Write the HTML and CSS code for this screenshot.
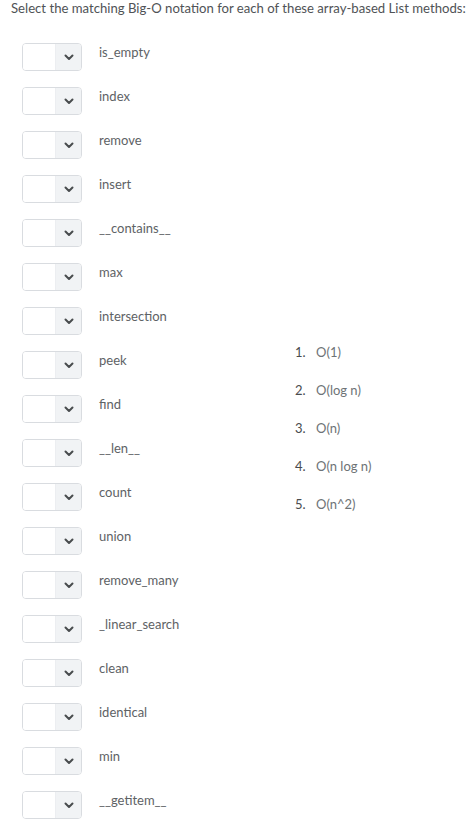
FILE: index.html
```html
<!DOCTYPE html>
<html>
<head>
<meta charset="utf-8">
<link rel="stylesheet" href="styles.css">
</head>
<body>
<p class="title">Select the matching Big-O notation for each of these array-based List methods:</p>
<div class="quiz">
  <div class="rows">
    <div class="row"><div class="sel"><span class="val"></span><span class="btn"><svg width="10" height="7" viewBox="0 0 10 7"><path d="M1.5 1.5 L5 5 L8.5 1.5" fill="none" stroke="#494c4e" stroke-width="2" stroke-linecap="round" stroke-linejoin="round"/></svg></span></div><span class="label">is_empty</span></div>
    <div class="row"><div class="sel"><span class="val"></span><span class="btn"><svg width="10" height="7" viewBox="0 0 10 7"><path d="M1.5 1.5 L5 5 L8.5 1.5" fill="none" stroke="#494c4e" stroke-width="2" stroke-linecap="round" stroke-linejoin="round"/></svg></span></div><span class="label">index</span></div>
    <div class="row"><div class="sel"><span class="val"></span><span class="btn"><svg width="10" height="7" viewBox="0 0 10 7"><path d="M1.5 1.5 L5 5 L8.5 1.5" fill="none" stroke="#494c4e" stroke-width="2" stroke-linecap="round" stroke-linejoin="round"/></svg></span></div><span class="label">remove</span></div>
    <div class="row"><div class="sel"><span class="val"></span><span class="btn"><svg width="10" height="7" viewBox="0 0 10 7"><path d="M1.5 1.5 L5 5 L8.5 1.5" fill="none" stroke="#494c4e" stroke-width="2" stroke-linecap="round" stroke-linejoin="round"/></svg></span></div><span class="label">insert</span></div>
    <div class="row"><div class="sel"><span class="val"></span><span class="btn"><svg width="10" height="7" viewBox="0 0 10 7"><path d="M1.5 1.5 L5 5 L8.5 1.5" fill="none" stroke="#494c4e" stroke-width="2" stroke-linecap="round" stroke-linejoin="round"/></svg></span></div><span class="label">__contains__</span></div>
    <div class="row"><div class="sel"><span class="val"></span><span class="btn"><svg width="10" height="7" viewBox="0 0 10 7"><path d="M1.5 1.5 L5 5 L8.5 1.5" fill="none" stroke="#494c4e" stroke-width="2" stroke-linecap="round" stroke-linejoin="round"/></svg></span></div><span class="label">max</span></div>
    <div class="row"><div class="sel"><span class="val"></span><span class="btn"><svg width="10" height="7" viewBox="0 0 10 7"><path d="M1.5 1.5 L5 5 L8.5 1.5" fill="none" stroke="#494c4e" stroke-width="2" stroke-linecap="round" stroke-linejoin="round"/></svg></span></div><span class="label">intersection</span></div>
    <div class="row"><div class="sel"><span class="val"></span><span class="btn"><svg width="10" height="7" viewBox="0 0 10 7"><path d="M1.5 1.5 L5 5 L8.5 1.5" fill="none" stroke="#494c4e" stroke-width="2" stroke-linecap="round" stroke-linejoin="round"/></svg></span></div><span class="label">peek</span></div>
    <div class="row"><div class="sel"><span class="val"></span><span class="btn"><svg width="10" height="7" viewBox="0 0 10 7"><path d="M1.5 1.5 L5 5 L8.5 1.5" fill="none" stroke="#494c4e" stroke-width="2" stroke-linecap="round" stroke-linejoin="round"/></svg></span></div><span class="label">find</span></div>
    <div class="row"><div class="sel"><span class="val"></span><span class="btn"><svg width="10" height="7" viewBox="0 0 10 7"><path d="M1.5 1.5 L5 5 L8.5 1.5" fill="none" stroke="#494c4e" stroke-width="2" stroke-linecap="round" stroke-linejoin="round"/></svg></span></div><span class="label">__len__</span></div>
    <div class="row"><div class="sel"><span class="val"></span><span class="btn"><svg width="10" height="7" viewBox="0 0 10 7"><path d="M1.5 1.5 L5 5 L8.5 1.5" fill="none" stroke="#494c4e" stroke-width="2" stroke-linecap="round" stroke-linejoin="round"/></svg></span></div><span class="label">count</span></div>
    <div class="row"><div class="sel"><span class="val"></span><span class="btn"><svg width="10" height="7" viewBox="0 0 10 7"><path d="M1.5 1.5 L5 5 L8.5 1.5" fill="none" stroke="#494c4e" stroke-width="2" stroke-linecap="round" stroke-linejoin="round"/></svg></span></div><span class="label">union</span></div>
    <div class="row"><div class="sel"><span class="val"></span><span class="btn"><svg width="10" height="7" viewBox="0 0 10 7"><path d="M1.5 1.5 L5 5 L8.5 1.5" fill="none" stroke="#494c4e" stroke-width="2" stroke-linecap="round" stroke-linejoin="round"/></svg></span></div><span class="label">remove_many</span></div>
    <div class="row"><div class="sel"><span class="val"></span><span class="btn"><svg width="10" height="7" viewBox="0 0 10 7"><path d="M1.5 1.5 L5 5 L8.5 1.5" fill="none" stroke="#494c4e" stroke-width="2" stroke-linecap="round" stroke-linejoin="round"/></svg></span></div><span class="label">_linear_search</span></div>
    <div class="row"><div class="sel"><span class="val"></span><span class="btn"><svg width="10" height="7" viewBox="0 0 10 7"><path d="M1.5 1.5 L5 5 L8.5 1.5" fill="none" stroke="#494c4e" stroke-width="2" stroke-linecap="round" stroke-linejoin="round"/></svg></span></div><span class="label">clean</span></div>
    <div class="row"><div class="sel"><span class="val"></span><span class="btn"><svg width="10" height="7" viewBox="0 0 10 7"><path d="M1.5 1.5 L5 5 L8.5 1.5" fill="none" stroke="#494c4e" stroke-width="2" stroke-linecap="round" stroke-linejoin="round"/></svg></span></div><span class="label">identical</span></div>
    <div class="row"><div class="sel"><span class="val"></span><span class="btn"><svg width="10" height="7" viewBox="0 0 10 7"><path d="M1.5 1.5 L5 5 L8.5 1.5" fill="none" stroke="#494c4e" stroke-width="2" stroke-linecap="round" stroke-linejoin="round"/></svg></span></div><span class="label">min</span></div>
    <div class="row"><div class="sel"><span class="val"></span><span class="btn"><svg width="10" height="7" viewBox="0 0 10 7"><path d="M1.5 1.5 L5 5 L8.5 1.5" fill="none" stroke="#494c4e" stroke-width="2" stroke-linecap="round" stroke-linejoin="round"/></svg></span></div><span class="label">__getitem__</span></div>
  </div>
  <ol class="answers">
    <li><span class="num">1.</span><span class="ans">O(1)</span></li>
    <li><span class="num">2.</span><span class="ans">O(log n)</span></li>
    <li><span class="num">3.</span><span class="ans">O(n)</span></li>
    <li><span class="num">4.</span><span class="ans">O(n log n)</span></li>
    <li><span class="num">5.</span><span class="ans">O(n^2)</span></li>
  </ol>
</div>
</body>
</html>
```
FILE: styles.css
```css
html, body {
  margin: 0;
  padding: 0;
  background: #ffffff;
}
body {
  font-family: Lato, "Open Sans", sans-serif;
  color: #494c4e;
  font-size: 13px;
}
.title {
  margin: 0;
  padding: 0 0 0 11px;
  font-size: 13.15px;
  line-height: 17px;
  color: #505356;
}
.quiz {
  display: flex;
  padding: 26px 0 0 22px;
}
.rows {
  display: flex;
  flex-direction: column;
  gap: 16px;
  width: 273px;
}
.row {
  display: flex;
  align-items: flex-start;
  height: 28px;
}
.sel {
  display: flex;
  width: 60px;
  height: 28px;
  box-sizing: border-box;
  border: 1px solid #d9dce0;
  border-radius: 4px;
  overflow: hidden;
  background: #fff;
}
.val {
  width: 32px;
  background: #fff;
}
.btn {
  flex: 1;
  background: #f1f3f5;
  border-left: 1px solid #eceef1;
  display: flex;
  align-items: center;
  justify-content: center;
  padding-top: 1px;
}
.label {
  margin-left: 17px;
  line-height: 18px;
  color: #5e6265;
}
.answers {
  list-style: none;
  margin: 300px 0 0 0;
  padding: 0;
  display: flex;
  flex-direction: column;
  gap: 20px;
}
.answers li {
  display: flex;
  line-height: 18px;
}
.num {
  width: 21px;
  color: #494c4e;
}
.ans {
  color: #6e7376;
}
```
